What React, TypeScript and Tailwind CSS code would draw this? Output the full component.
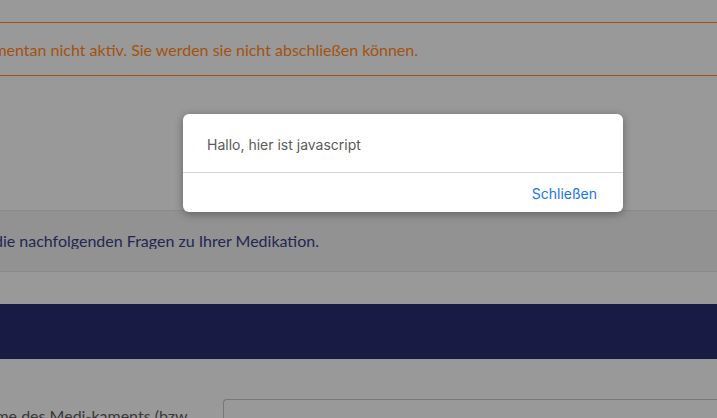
export default function App() {
  return (
    <div className="relative w-[717px] h-[418px] overflow-hidden bg-[#999999]" style={{ fontFamily: 'Lato, "Noto Sans", sans-serif' }}>
      <div className="h-[22px]" />
      <div className="h-[54px] border-y border-[#a4520f] flex items-center">
        <div className="w-[418px] flex justify-end overflow-hidden whitespace-nowrap text-[16px] text-[#a3520e] leading-none pt-[1px]">
          <span>Dieses Formular ist momentan nicht aktiv. Sie werden sie nicht abschließen können.</span>
        </div>
      </div>
      <div className="h-[134px]" />
      <div className="h-[62px] bg-[#929292] border-y border-[#8a8a8a] flex items-center">
        <div className="w-[319px] flex justify-end overflow-hidden whitespace-nowrap text-[16px] text-[#222752] leading-none">
          <span>Bitte beantworten Sie die nachfolgenden Fragen zu Ihrer Medikation.</span>
        </div>
      </div>
      <div className="h-[32px]" />
      <div className="h-[55px] bg-[#181c45]" />
      <div className="flex mt-[40px]">
        <div className="w-[191px] flex justify-end overflow-hidden whitespace-nowrap text-[16px] text-[#3a3a3a] leading-none pt-[9px]">
          <span>Name des Medi-kaments (bzw.</span>
        </div>
        <div className="ml-[32px] flex-1 h-[40px] border border-[#777777] rounded-tl-[4px] border-r-0" />
      </div>

      <div
        className="absolute left-[183px] top-[114px] w-[440px] h-[98px] bg-white rounded-[6px] shadow-[0_2px_8px_rgba(0,0,0,0.35)] flex flex-col"
        style={{ fontFamily: 'Inter, "Noto Sans", sans-serif' }}
      >
        <div className="h-[59px] border-b border-[#d4d4d4] flex items-center pl-[24px] pt-[2px] text-[14px] text-[#5a5a5a]">
          Hallo, hier ist javascript
        </div>
        <div className="flex-1 flex items-center justify-end pr-[26px] pt-[2px] text-[14px] text-[#1a73e8]">
          Schließen
        </div>
      </div>
    </div>
  );
}
